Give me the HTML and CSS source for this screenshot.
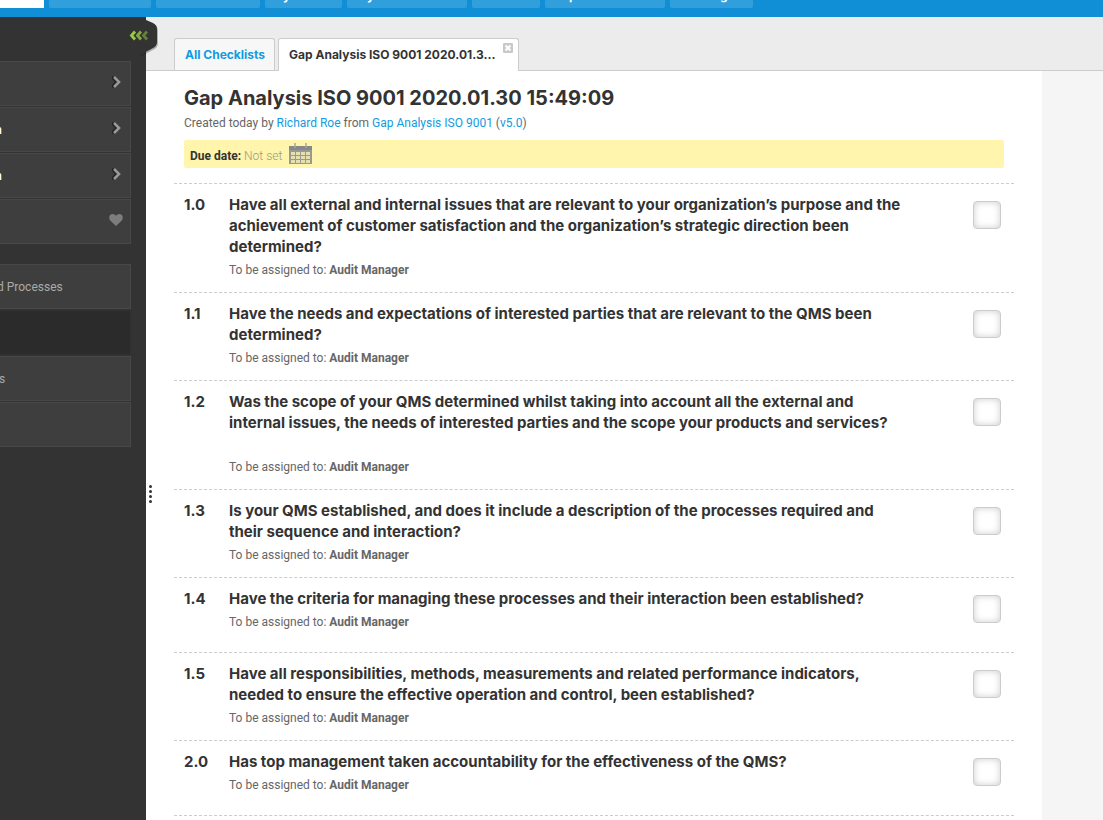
FILE: index.html
```html
<!DOCTYPE html>
<html lang="en">
<head>
<meta charset="utf-8">
<title>Gap Analysis ISO 9001</title>
<link rel="stylesheet" href="styles.css">
</head>
<body>
<header class="topbar">
  <nav class="topnav">
    <a class="topnav-item topnav-item--active w-44" href="#"></a>
    <a class="topnav-item w-102" href="#"></a>
    <a class="topnav-item w-104" href="#"></a>
    <a class="topnav-item w-77 in-18" href="#">y</a>
    <a class="topnav-item w-120 in-20" href="#">y</a>
    <a class="topnav-item w-68" href="#"></a>
    <a class="topnav-item w-120 in-24" href="#">p</a>
    <a class="topnav-item w-83 in-50" href="#">g</a>
  </nav>
</header>
<div class="layout">
  <aside class="sidebar">
    <button class="collapse" aria-label="Collapse sidebar">
      <svg width="48" height="42" viewBox="0 0 48 42">
        <path d="M20 1L32 6Q38 8 38 14V26Q38 31 33 33L20 40Z" fill="#222" opacity=".3"/>
        <path d="M0 0H26V3L33 6Q37 8 37 12V25Q37 29 33 31L20 38H0Z" fill="#333"/>
        <g fill="none" stroke-width="2.8">
          <path d="M15 14.500L11.500 18.500L15 22.500" stroke="#9c4"/>
          <path d="M21 14.500L17.500 18.500L21 22.500" stroke="#82ab40"/>
          <path d="M27 14.500L23.500 18.500L27 22.500" stroke="#64803b"/>
        </g>
      </svg>
    </button>
    <nav class="menu">
      <a class="menu-item" href="#"><svg class="chev" width="10" height="14" viewBox="0 0 10 14"><path d="M0 2L5 7L0 12" fill="none" stroke="#222" stroke-width="3"/><path d="M2 2L7 7L2 12" fill="none" stroke="#999" stroke-width="2.6"/></svg></a>
      <a class="menu-item" href="#"><span class="menu-text menu-text--strong">n</span><svg class="chev" width="10" height="14" viewBox="0 0 10 14"><path d="M0 2L5 7L0 12" fill="none" stroke="#222" stroke-width="3"/><path d="M2 2L7 7L2 12" fill="none" stroke="#999" stroke-width="2.6"/></svg></a>
      <a class="menu-item" href="#"><span class="menu-text menu-text--strong">n</span><svg class="chev" width="10" height="14" viewBox="0 0 10 14"><path d="M0 2L5 7L0 12" fill="none" stroke="#222" stroke-width="3"/><path d="M2 2L7 7L2 12" fill="none" stroke="#999" stroke-width="2.6"/></svg></a>
      <a class="menu-item" href="#"><svg class="heart" width="14" height="12" viewBox="0 0 14 12"><path d="M7 12L1.200 6.500C-.8 4 .3 0 3.800 0C5.500 0 6.500 1 7 2C7.500 1 8.500 0 10.200 0C13.700 0 14.800 4 12.800 6.500Z" fill="#7d7d7d"/></svg></a>
    </nav>
    <nav class="menu menu--sub">
      <a class="menu-item" href="#"><span class="menu-text">d Processes</span></a>
      <a class="menu-item menu-item--current" href="#"></a>
      <a class="menu-item" href="#"><span class="menu-text menu-text--end">s</span></a>
      <a class="menu-item" href="#"></a>
    </nav>
  </aside>
  <div class="main">
    <div class="grip"><i></i><i></i><i></i><i></i></div>
    <div class="tabs">
      <a class="tab" href="#">All Checklists</a>
      <div class="tab tab--active">Gap Analysis ISO 9001 2020.01.3...
        <button class="tab-close" aria-label="Close tab"><svg width="10" height="10" viewBox="0 0 10 10"><rect width="10" height="10" rx="1" fill="#c9c9c9"/><path d="M2.500 2.500L7.500 7.500M7.500 2.500L2.500 7.500" stroke="#fff" stroke-width="2"/></svg></button>
      </div>
    </div>
    <main class="sheet">
      <div class="intro">
        <h1 class="title">Gap Analysis ISO 9001 2020.01.30 15:49:09</h1>
        <p class="meta">Created today by <a href="#">Richard Roe</a> from <a href="#">Gap Analysis ISO 9001</a> (<a href="#">v5.0</a>)</p>
        <div class="due"><b>Due date:</b> <span class="due-value">Not set</span>
          <button class="calendar" aria-label="Pick a due date"><svg width="24" height="22" viewBox="0 0 24 22"><path d="M0 4H23V21H0Z" fill="#999994"/><path d="M0 3H23V7H0Z" fill="#85878a"/><path d="M6 0V5M17 0V5" stroke="#aaa88c" stroke-width="1.500"/><g fill="#e6dfae"><path d="M2 9h4v3H2zM7 9h4v3H7zM12 9h4v3h-4zM17 9h4v3h-4zM2 13h4v3H2zM7 13h4v3H7zM12 13h4v3h-4zM17 13h4v3h-4zM2 17h4v3H2zM7 17h4v3H7zM12 17h4v3h-4zM17 17h4v3h-4z"/></g></svg></button>
        </div>
      </div>
      <ol class="list">
        <li class="row"><span class="num">1.0</span><div class="body"><label class="question" for="q1">Have all external and internal issues that are relevant to your organization’s purpose and the<br>achievement of customer satisfaction and the organization’s strategic direction been<br>determined?</label><p class="assign">To be assigned to: <b>Audit Manager</b></p></div><input class="check" type="checkbox" id="q1"></li>
        <li class="row"><span class="num">1.1</span><div class="body"><label class="question" for="q2">Have the needs and expectations of interested parties that are relevant to the QMS been<br>determined?</label><p class="assign">To be assigned to: <b>Audit Manager</b></p></div><input class="check" type="checkbox" id="q2"></li>
        <li class="row"><span class="num">1.2</span><div class="body"><label class="question" for="q3">Was the scope of your QMS determined whilst taking into account all the external and<br>internal issues, the needs of interested parties and the scope your products and services?<br><br></label><p class="assign">To be assigned to: <b>Audit Manager</b></p></div><input class="check" type="checkbox" id="q3"></li>
        <li class="row"><span class="num">1.3</span><div class="body"><label class="question" for="q4">Is your QMS established, and does it include a description of the processes required and<br>their sequence and interaction?</label><p class="assign">To be assigned to: <b>Audit Manager</b></p></div><input class="check" type="checkbox" id="q4"></li>
        <li class="row"><span class="num">1.4</span><div class="body"><label class="question" for="q5">Have the criteria for managing these processes and their interaction been established?</label><p class="assign">To be assigned to: <b>Audit Manager</b></p></div><input class="check" type="checkbox" id="q5"></li>
        <li class="row"><span class="num">1.5</span><div class="body"><label class="question" for="q6">Have all responsibilities, methods, measurements and related performance indicators,<br>needed to ensure the effective operation and control, been established?</label><p class="assign">To be assigned to: <b>Audit Manager</b></p></div><input class="check" type="checkbox" id="q6"></li>
        <li class="row"><span class="num">2.0</span><div class="body"><label class="question" for="q7">Has top management taken accountability for the effectiveness of the QMS?</label><p class="assign">To be assigned to: <b>Audit Manager</b></p></div><input class="check" type="checkbox" id="q7"></li>
      </ol>
    </main>
  </div>
</div>
</body>
</html>
```
FILE: styles.css
```css
* { box-sizing: border-box; }
body {
  margin: 0;
  min-height: 100vh;
  display: flex;
  flex-direction: column;
  background: #f5f5f5;
  color: #333;
  font: 12px/18px Inter, "Liberation Sans", sans-serif;
}
a { color: #119be0; text-decoration: none; }
button { padding: 0; border: 0; background: none; cursor: pointer; }
svg { display: block; }

.topbar { height: 17px; background: #108fd7; }
.topnav { display: flex; gap: 5px; }
.topnav-item {
  height: 8px;
  overflow: hidden;
  display: flex;
  align-items: flex-end;
  background: #329fdd;
  border-radius: 0 0 2px 2px;
  color: #fff;
  font-weight: 700;
  line-height: 20px;
}
.topnav-item--active { background: #fff; border-radius: 0; }
.w-44 { width: 44px; }
.w-68 { width: 68px; }
.w-77 { width: 77px; }
.w-83 { width: 83px; }
.w-102 { width: 102px; }
.w-104 { width: 104px; }
.w-120 { width: 120px; }
.in-18 { padding: 0 0 2px 18px; }
.in-20 { padding: 0 0 2px 20px; }
.in-24 { padding: 0 0 2px 24px; }
.in-50 { padding: 0 0 2px 50px; }

.layout { flex: 1; display: flex; }
.sidebar {
  position: relative;
  flex: 0 0 146px;
  padding-top: 44px;
  background: #333;
}
.collapse { position: absolute; z-index: 2; left: 120px; top: 0; }
.menu { display: flex; flex-direction: column; gap: 1px; margin-right: 15px; }
.menu--sub { margin-top: 20px; }
.menu-item {
  height: 45px;
  display: flex;
  align-items: center;
  padding-right: 8px;
  background: #3e3e3e;
  border: 1px solid #484848;
  border-left: 0;
  color: #aaa;
  font-family: Roboto, sans-serif;
}
.menu-item--current { background: #2b2b2b; border-color: #303030; }
.menu-text { margin-left: -3px; }
.menu-text--end { margin-left: -1px; }
.menu-text--strong { margin-left: -5px; color: #fff; font-weight: 700; }
.chev, .heart { margin: 0 0 4px auto; }
.heart { margin-right: -1px; }

.main { position: relative; flex: 1; min-width: 0; display: flex; flex-direction: column; }
.grip { position: absolute; left: 3px; top: 468px; display: flex; flex-direction: column; gap: 2px; }
.grip i { width: 3px; height: 3px; border-radius: 50%; background: #333; }
.tabs {
  height: 54px;
  display: flex;
  align-items: flex-end;
  gap: 3px;
  padding-left: 28px;
  background: #ececec;
  border-bottom: 1px solid #ccc;
}
.tab {
  height: 32px;
  padding: 0 9px 0 10px;
  background: #f7f7f7;
  border: 1px solid #ccc;
  border-bottom: 0;
  border-radius: 3px 3px 0 0;
  font-weight: 700;
  line-height: 32px;
  white-space: nowrap;
}
.tab--active { display: flex; gap: 8px; height: 33px; padding-right: 5px; margin-bottom: -1px; background: #fff; }
.tab-close { align-self: flex-start; margin-top: 4px; }

.sheet { flex: 1; margin-right: 61px; padding: 14px 28px 0; background: #fff; }
.intro { padding: 0 10px 15px; }
.title { margin: 0; font-size: 20px; line-height: 26px; font-weight: 700; }
.meta { margin: 3px 0 8px; color: #666; font-family: Roboto, sans-serif; }
.due {
  height: 28px;
  display: flex;
  align-items: center;
  gap: 3px;
  padding: 3px 6px 0;
  background: #fff5ac;
  border-radius: 2px;
  font-family: Roboto, sans-serif;
}
.due-value { color: #999982; font-weight: 300; }
.calendar { margin: 0 0 3px 4px; }

.list { margin: 0; padding: 0; list-style: none; border-bottom: 1px dashed #ccc; }
.row {
  display: flex;
  min-height: 75px;
  padding: 10px 13px 13px 10px;
  border-top: 1px dashed #ccc;
}
.num { flex: 0 0 45px; font-size: 15px; line-height: 21px; font-weight: 700; }
.body { flex: 1; min-width: 0; }
.question { display: block; font-size: 15px; line-height: 21px; font-weight: 700; white-space: nowrap; }
.assign { margin: 4px 0 0; color: #666; font-family: Roboto, sans-serif; }
.check {
  appearance: none;
  flex: none;
  width: 28px;
  height: 28px;
  margin: 7px 0 0;
  background: #fff;
  border: 1px solid #ccc;
  border-radius: 4px;
  box-shadow: inset 0 0 7px #ccc;
}
```
